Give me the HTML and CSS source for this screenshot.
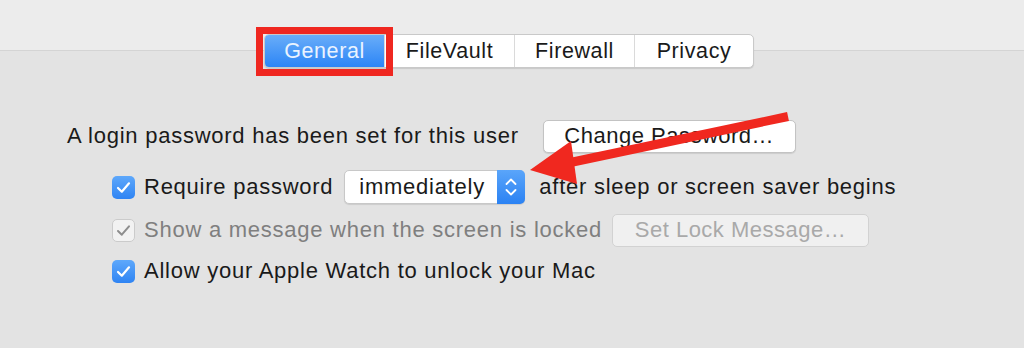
FILE: index.html
```html
<!DOCTYPE html>
<html lang="en">
<head>
<meta charset="utf-8">
<title>Security &amp; Privacy — General</title>
<link rel="stylesheet" href="styles.css">
</head>
<body>
<div class="page">
  <div class="toolbar"></div>
  <nav class="tabs-wrap">
    <div class="tabs">
      <div class="tab tab-active">General</div>
      <div class="tab">FileVault</div>
      <div class="tab">Firewall</div>
      <div class="tab">Privacy</div>
    </div>
  </nav>

  <main class="content">
    <div class="row row-login">
      <span class="label">A login password has been set for this user</span>
      <button class="btn btn-change">Change Password…</button>
    </div>

    <div class="row row-option row-require">
      <span class="check check-on">
        <svg viewBox="0 0 23 23" width="23" height="23"><path d="M6 12 L9.8 15.7 L17 7.3" fill="none" stroke="#fff" stroke-width="2.2" stroke-linecap="round" stroke-linejoin="round"/></svg>
      </span>
      <span class="label">Require password</span>
      <div class="popup">
        <span class="popup-value">immediately</span>
        <span class="popup-stepper">
          <svg viewBox="0 0 28 34" width="28" height="34"><path d="M9.5 14 L14 9.5 L18.5 14" fill="none" stroke="#fff" stroke-width="1.8" stroke-linecap="round" stroke-linejoin="round"/><path d="M9.5 20 L14 24.5 L18.5 20" fill="none" stroke="#fff" stroke-width="1.8" stroke-linecap="round" stroke-linejoin="round"/></svg>
        </span>
      </div>
      <span class="label label-after">after sleep or screen saver begins</span>
    </div>

    <div class="row row-option row-message">
      <span class="check check-disabled">
        <svg viewBox="0 0 23 23" width="23" height="23"><path d="M6 12 L9.8 15.7 L17 7.3" fill="none" stroke="#8d8d8d" stroke-width="2" stroke-linecap="round" stroke-linejoin="round"/></svg>
      </span>
      <span class="label label-disabled">Show a message when the screen is locked</span>
      <button class="btn btn-disabled">Set Lock Message…</button>
    </div>

    <div class="row row-option row-watch">
      <span class="check check-on">
        <svg viewBox="0 0 23 23" width="23" height="23"><path d="M6 12 L9.8 15.7 L17 7.3" fill="none" stroke="#fff" stroke-width="2.2" stroke-linecap="round" stroke-linejoin="round"/></svg>
      </span>
      <span class="label">Allow your Apple Watch to unlock your Mac</span>
    </div>
  </main>

  <svg class="annotation-arrow" viewBox="0 0 1024 348" width="1024" height="348">
    <line x1="788" y1="116.5" x2="568" y2="163" stroke="#f0281f" stroke-width="9" stroke-linecap="butt"/>
    <polygon points="530,170 571,141 577,184" fill="#f0281f"/>
  </svg>
</div>
</body>
</html>
```

FILE: styles.css
```css
html, body {
  margin: 0;
  padding: 0;
}

body {
  background: #e3e3e3;
  font-family: "Liberation Sans", Arial, sans-serif;
  font-size: 22px;
  letter-spacing: 0.75px;
  color: #1a1a1a;
}

.page {
  position: relative;
  width: 1024px;
  height: 348px;
  overflow: hidden;
}

.toolbar {
  height: 50px;
  background: #ececec;
  border-bottom: 1px solid #d4d4d4;
}

.tabs-wrap {
  display: flex;
  padding-left: 264px;
  margin-top: -17px;
}

.tabs {
  display: grid;
  grid-template-columns: 119px 130px 120px 119px;
  height: 32px;
  background: #ffffff;
  border: 1px solid #c9c9c9;
  border-radius: 5px;
  box-shadow: 0 1px 1px rgba(0, 0, 0, 0.12);
}

.tab {
  display: flex;
  align-items: center;
  justify-content: center;
  font-size: 21.5px;
  letter-spacing: 0.6px;
  color: #1a1a1a;
  border-left: 1px solid #dadada;
}

.tab:first-child {
  border-left: none;
}

.tab-active {
  position: relative;
  color: #eaf3ff;
  background: linear-gradient(#69adf9, #2c85f6);
  border-radius: 4px 0 0 4px;
}

/* red annotation box drawn over the active tab */
.tab-active::after {
  content: "";
  position: absolute;
  top: -8px;
  left: -9px;
  right: -9px;
  bottom: -9px;
  border: 7px solid #ef2720;
  pointer-events: none;
}

.content {
  display: flex;
  flex-direction: column;
  padding-left: 67px;
  margin-top: 51px;
}

.row {
  display: flex;
  align-items: center;
  height: 34px;
}

.row-login {
  gap: 24px;
}

.row-option {
  padding-left: 45px;
}

.row-require {
  margin-top: 17px;
}

.row-message {
  margin-top: 9px;
}

.row-watch {
  margin-top: 7px;
}

.label {
  white-space: nowrap;
}

.label-disabled {
  color: #7f7f7f;
}

.label-after {
  margin-left: 14px;
}

.check {
  width: 23px;
  height: 23px;
  box-sizing: border-box;
  border-radius: 5px;
  margin-right: 9px;
  display: flex;
  flex: none;
}

.check svg {
  display: block;
}

.check-on {
  background: linear-gradient(#5ea8fb, #2f84f3);
}

.check-disabled {
  background: #f2f2f2;
  border: 1px solid #cbcbcb;
}

.check-disabled svg {
  margin: -1px;
}

.btn {
  font-family: inherit;
  font-size: 22px;
  letter-spacing: 0.5px;
  height: 33px;
  border-radius: 5px;
  padding: 0;
  display: flex;
  align-items: center;
  justify-content: center;
}

.btn-change {
  width: 253px;
  background: #ffffff;
  color: #1a1a1a;
  border: 1px solid #c3c3c3;
  box-shadow: 0 1px 1px rgba(0, 0, 0, 0.1);
}

.btn-disabled {
  width: 257px;
  margin-left: 10px;
  background: #f0f0f0;
  color: #a9a9a9;
  border: 1px solid #d2d2d2;
}

.popup {
  display: flex;
  align-items: stretch;
  width: 181px;
  height: 34px;
  box-sizing: border-box;
  margin-left: 11px;
  background: #ffffff;
  border: 1px solid #c8c8c8;
  border-radius: 5px;
  box-shadow: 0 1px 1px rgba(0, 0, 0, 0.1);
}

.popup-value {
  flex: 1;
  display: flex;
  align-items: center;
  padding-left: 14px;
}

.popup-stepper {
  width: 28px;
  margin: -1px -1px -1px 0;
  border-radius: 0 5px 5px 0;
  background: linear-gradient(#5aa5fa, #2b82f3);
  display: flex;
}

.popup-stepper svg {
  display: block;
}

.annotation-arrow {
  position: absolute;
  left: 0;
  top: 0;
  pointer-events: none;
}
```
